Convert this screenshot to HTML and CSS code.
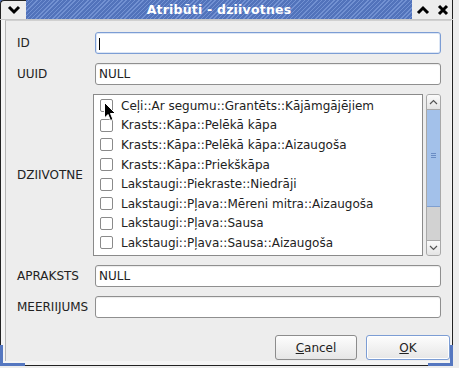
FILE: index.html
```html
<!DOCTYPE html>
<html lang="lv">
<head>
  <meta charset="UTF-8">
  <title>Atribūti - dziivotnes</title>
  <link rel="stylesheet" href="styles.css">
</head>
<body>

  <div class="window">
    <div class="titlebar">
      <div class="tb-btn tb-menu">
        <svg width="14" height="10" viewBox="0 0 14 10"><path d="M2 2 L7 7 L12 2" fill="none" stroke="#000" stroke-width="3"/></svg>
      </div>
      <div class="title">Atribūti - dziivotnes</div>
      <div class="tb-btn">
        <svg width="14" height="10" viewBox="0 0 14 10"><path d="M2 8 L7 3 L12 8" fill="none" stroke="#000" stroke-width="3"/></svg>
      </div>
      <div class="tb-btn">
        <svg width="12" height="12" viewBox="0 0 12 12"><path d="M2 2 L10 10 M10 2 L2 10" fill="none" stroke="#000" stroke-width="3"/></svg>
      </div>
    </div>

    <div class="dialog">
      <div class="form">
        <label>ID</label>
        <div class="entry focused"><span class="caret"></span></div>

        <label>UUID</label>
        <div class="entry">NULL</div>

        <label>DZIIVOTNE</label>
        <div class="list-row">
          <ul class="checklist">
            <li><span class="check"></span>Ceļi::Ar segumu::Grantēts::Kājāmgājējiem</li>
            <li><span class="check"></span>Krasts::Kāpa::Pelēkā kāpa</li>
            <li><span class="check"></span>Krasts::Kāpa::Pelēkā kāpa::Aizaugoša</li>
            <li><span class="check"></span>Krasts::Kāpa::Priekškāpa</li>
            <li><span class="check"></span>Lakstaugi::Piekraste::Niedrāji</li>
            <li><span class="check"></span>Lakstaugi::Pļava::Mēreni mitra::Aizaugoša</li>
            <li><span class="check"></span>Lakstaugi::Pļava::Sausa</li>
            <li><span class="check"></span>Lakstaugi::Pļava::Sausa::Aizaugoša</li>
          </ul>
          <div class="scrollbar">
            <div class="sb-arrow sb-up">
              <svg width="9" height="6" viewBox="0 0 9 6"><path d="M1 5 L4.5 1.5 L8 5" fill="none" stroke="#555" stroke-width="1.2"/></svg>
            </div>
            <div class="sb-thumb"><span class="grip"></span></div>
            <div class="sb-trough"></div>
            <div class="sb-arrow sb-down">
              <svg width="9" height="6" viewBox="0 0 9 6"><path d="M1 1 L4.5 4.5 L8 1" fill="none" stroke="#555" stroke-width="1.2"/></svg>
            </div>
          </div>
        </div>

        <label>APRAKSTS</label>
        <div class="entry">NULL</div>

        <label>MEERIIJUMS</label>
        <div class="entry"></div>
      </div>

      <div class="buttons">
        <button class="btn"><u>C</u>ancel</button>
        <button class="btn default"><u>O</u>K</button>
      </div>
    </div>

    <span class="corner corner-left"></span>
    <span class="corner corner-right"></span>
  </div>

  <svg class="cursor" width="13" height="21" viewBox="0 0 13 21">
    <path d="M0.5 0.5 L0.5 16 L4 12.5 L6.5 18.5 L9 17.5 L6.5 11.5 L11.5 11.5 Z" fill="#000" stroke="#fff" stroke-width="1"/>
  </svg>

</body>
</html>
```

FILE: styles.css
```css
body {
  margin: 0;
  background: #ededed;
  font-family: "DejaVu Sans", "Liberation Sans", sans-serif;
  font-size: 12px;
  color: #222;
  width: 459px;
  height: 368px;
  overflow: hidden;
  position: relative;
}

.window {
  position: relative;
  width: 453px;
  height: 366px;
  box-sizing: border-box;
  border: 1px solid #222;
  border-top: none;
  border-radius: 4px 4px 0 0;
  background: #f4f4f4;
  display: flex;
  flex-direction: column;
}

/* title bar */
.titlebar {
  display: flex;
  height: 19px;
  border-bottom: 1px solid #c8c8c8;
  background: repeating-linear-gradient(135deg, #5273bb 0 2px, #7291d2 2px 3px);
  margin: 0 -1px;
}

.tb-btn {
  width: 22px;
  display: flex;
  align-items: center;
  justify-content: center;
  background: #ededed;
}

.tb-btn:last-child {
  width: 18px;
  border-right: 1px solid #222;
}

.tb-menu {
  width: 26px;
  border-left: 1px solid #222;
  border-top: 1px solid #222;
  border-radius: 4px 0 0 0;
  box-sizing: border-box;
}

.title {
  flex: 1;
  text-align: center;
  color: #fff;
  font-weight: bold;
  font-size: 12.5px;
  line-height: 19px;
  letter-spacing: 0.2px;
}

/* dialog body */
.dialog {
  flex: 1;
  margin: 0 1px 4px 4px;
  background: #ededed;
  border-left: 1px solid #b4b4b4;
  border-top: 1px solid #d0d0d0;
  padding: 11px 10px 0 11px;
  display: flex;
  flex-direction: column;
}

.form {
  display: grid;
  grid-template-columns: 76px 1fr;
  row-gap: 9px;
}

.form label {
  align-self: center;
}

.entry {
  height: 22px;
  box-sizing: border-box;
  margin-left: 2px;
  border: 1px solid #8f8f8f;
  border-radius: 3px;
  background: #fff;
  box-shadow: inset 0 1px 1px rgba(0, 0, 0, 0.08);
  padding: 0 3px;
  line-height: 20px;
}

.entry.focused {
  border-color: #7c9dd4;
  box-shadow: inset 0 0 0 1px #dce6f5;
}

.caret {
  display: inline-block;
  width: 1px;
  height: 12px;
  background: #000;
  vertical-align: middle;
}

/* check list */
.list-row {
  display: flex;
  gap: 3px;
  height: 162px;
}

.checklist {
  flex: 1;
  margin: 0;
  padding: 1px 0 0;
  list-style: none;
  background: #fff;
  border: 1px solid #8a8a8a;
  overflow: hidden;
}

.checklist li {
  display: flex;
  align-items: center;
  height: 19.6px;
  padding-left: 6px;
  white-space: nowrap;
}

.check {
  width: 11px;
  height: 11px;
  border: 1px solid #8a8a8a;
  border-radius: 2px;
  background: #fff;
  margin-right: 8px;
}

.scrollbar {
  width: 15px;
  display: flex;
  flex-direction: column;
  border: 1px solid #a8a8a8;
  border-radius: 3px;
  box-sizing: border-box;
  overflow: hidden;
  background: #d2d2d2;
}

.sb-arrow {
  height: 14px;
  display: flex;
  align-items: center;
  justify-content: center;
  background: linear-gradient(#fbfbfb, #e4e4e4);
}

.sb-up {
  border-bottom: 1px solid #a8a8a8;
}

.sb-down {
  border-top: 1px solid #a8a8a8;
}

.sb-thumb {
  height: 96px;
  background: #a3c1ea;
  border-bottom: 1px solid #7f9fd0;
  display: flex;
  align-items: center;
  justify-content: center;
}

.grip {
  width: 5px;
  height: 5px;
  margin-top: -6px;
  border-top: 1px solid #6a8cc4;
  border-bottom: 1px solid #6a8cc4;
  box-sizing: border-box;
  position: relative;
}

.grip::after {
  content: "";
  position: absolute;
  left: 0;
  right: 0;
  top: 1px;
  border-top: 1px solid #6a8cc4;
}

.sb-trough {
  flex: 1;
}

/* buttons */
.buttons {
  display: flex;
  justify-content: flex-end;
  gap: 9px;
  margin-top: 17px;
  margin-right: -9px;
}

.btn {
  height: 25px;
  width: 82px;
  font-family: inherit;
  font-size: 12px;
  color: #222;
  border: 1px solid #8c8c8c;
  border-radius: 3px;
  background: linear-gradient(#fdfdfd, #e6e6e6);
  padding: 0;
}

.btn.default {
  width: 84px;
  border-color: #7c9dd4;
  box-shadow: inset 0 0 0 1px #ffffff;
}

/* window resize corners */
.corner {
  position: absolute;
  bottom: -1px;
  width: 22px;
  height: 18px;
}

.corner-left {
  left: -1px;
  border-left: 3px solid #5577c0;
  border-bottom: 3px solid #5577c0;
}

.corner-right {
  right: -1px;
  border-right: 3px solid #5577c0;
  border-bottom: 3px solid #5577c0;
}

.cursor {
  position: absolute;
  left: 104px;
  top: 102px;
}
```
